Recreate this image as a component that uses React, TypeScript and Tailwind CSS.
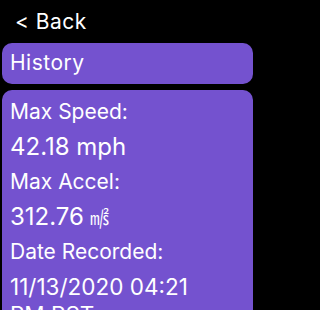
export default function App() {
  const rows = [
    { label: 'Max Speed:', value: '42.18 mph', size: 'text-[24px]' },
    { label: 'Max Accel:', value: '312.76', unit: '㎨', size: 'text-[24px]' },
    { label: 'Date Recorded:', value: '11/13/2020 04:21 PM PST', size: 'text-[22.5px]' },
  ];

  return (
    <div className="min-h-screen bg-black">
      <div
        className="w-[255px] h-[310px] overflow-hidden px-[2px] text-white"
        style={{ fontFamily: 'Inter, "Noto Sans", sans-serif' }}
      >
        <div className="pt-[10px] pl-[13px] mb-[9px] text-[21px] leading-[24px] tracking-[0.5px]">
          &lt; Back
        </div>

        <div className="rounded-[10px] bg-[#7452cf] px-[8px] pt-[8px] pb-[9px] text-[21px] leading-[24px] tracking-[0.5px]">
          History
        </div>

        <div className="mt-[6px] rounded-[10px] bg-[#7452cf] px-[8px] pt-[10px] pb-[16px] flex flex-col gap-[9px]">
          {rows.map((r) => (
            <div key={r.label} className="flex flex-col gap-[9px]">
              <div className="text-[21px] leading-[24px]">{r.label}</div>
              <div className={`${r.size} leading-[28px] pr-[40px]`}>
                {r.value}
                {r.unit && (
                  <span
                    className="ml-[6px] text-[19px]"
                    style={{ fontFamily: '"Noto Sans CJK JP", sans-serif' }}
                  >
                    {r.unit}
                  </span>
                )}
              </div>
            </div>
          ))}
        </div>
      </div>
    </div>
  );
}
